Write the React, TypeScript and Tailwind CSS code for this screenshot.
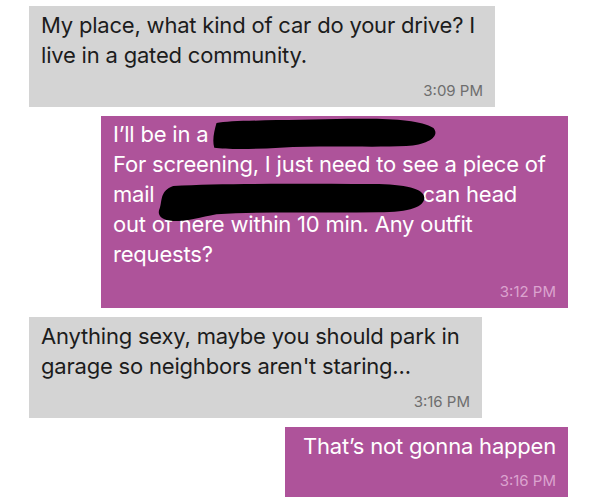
import React from "react";

const font = { fontFamily: "Inter, 'Noto Sans', sans-serif" };

function Redaction({ d, className }: { d: string; className: string }) {
  return (
    <svg className={`absolute pointer-events-none ${className}`} viewBox="0 0 100 40" preserveAspectRatio="none">
      <path d={d} fill="#000" />
    </svg>
  );
}

export default function App() {
  return (
    <main className="w-[597px] h-[500px] bg-white overflow-hidden" style={font}>
      <div className="flex flex-col gap-[9px] px-[29px] pt-[6px]">
        {/* incoming */}
        <div className="self-start w-[466px] bg-[#d4d4d4] text-[#1c1c1c] px-[12px] pt-[4px] pb-[6px]">
          <p className="text-[22px] leading-[30px] tracking-[-0.2px]">
            My place, what kind of car do your drive? I<br />live in a gated community.
          </p>
          <div className="text-right text-[15px] leading-[20px] text-[#6e6e6e] mt-[11px]">3:09 PM</div>
        </div>

        {/* outgoing, redacted */}
        <div className="relative self-end w-[467px] bg-[#ae539a] text-white px-[12px] pt-[3px] pb-[6px]">
          <p className="text-[22px] leading-[30px] tracking-[-0.2px]">
            I’ll be in a<br />
            For screening, I just need to see a piece of<br />
            mail <span className="inline-block w-[262px]" />can head<br />
            out of here within 10 min. Any outfit<br />
            requests?
          </p>
          <div className="text-right text-[15px] leading-[20px] text-[#dba3cf] mt-[13px]">3:12 PM</div>
          <Redaction
            className="left-[111px] top-[2px] w-[226px] h-[33px]"
            d="M2 6 C10 2 40 3 60 1 C78 0 92 2 98 12 C101 22 96 32 86 34 C70 36 50 33 30 36 C18 38 6 38 1 36 C0 26 1 16 2 6 Z"
          />
          <Redaction
            className="left-[56px] top-[67px] w-[270px] h-[39px]"
            d="M6 3 C25 0 55 1 80 1 C92 1 99 6 99 15 C99 24 94 30 82 30 C60 31 40 29 22 32 C16 35 12 39 6 39 C1 38 0 32 1 26 C2 18 1 8 6 3 Z"
          />
        </div>

        {/* incoming */}
        <div className="self-start w-[453px] bg-[#d4d4d4] text-[#1c1c1c] px-[12px] pt-[4px] pb-[6px]">
          <p className="text-[22px] leading-[30px] tracking-[-0.2px]">
            Anything sexy, maybe you should park in<br />garage so neighbors aren't staring...
          </p>
          <div className="text-right text-[15px] leading-[20px] text-[#6e6e6e] mt-[11px]">3:16 PM</div>
        </div>

        {/* outgoing */}
        <div className="self-end w-[283px] bg-[#ae539a] text-white px-[12px] pt-[4px] pb-[6px]">
          <p className="text-[22px] leading-[30px] tracking-[-0.2px] text-right">That’s not gonna happen</p>
          <div className="text-right text-[15px] leading-[20px] text-[#dba3cf] mt-[10px]">3:16 PM</div>
        </div>
      </div>
    </main>
  );
}
